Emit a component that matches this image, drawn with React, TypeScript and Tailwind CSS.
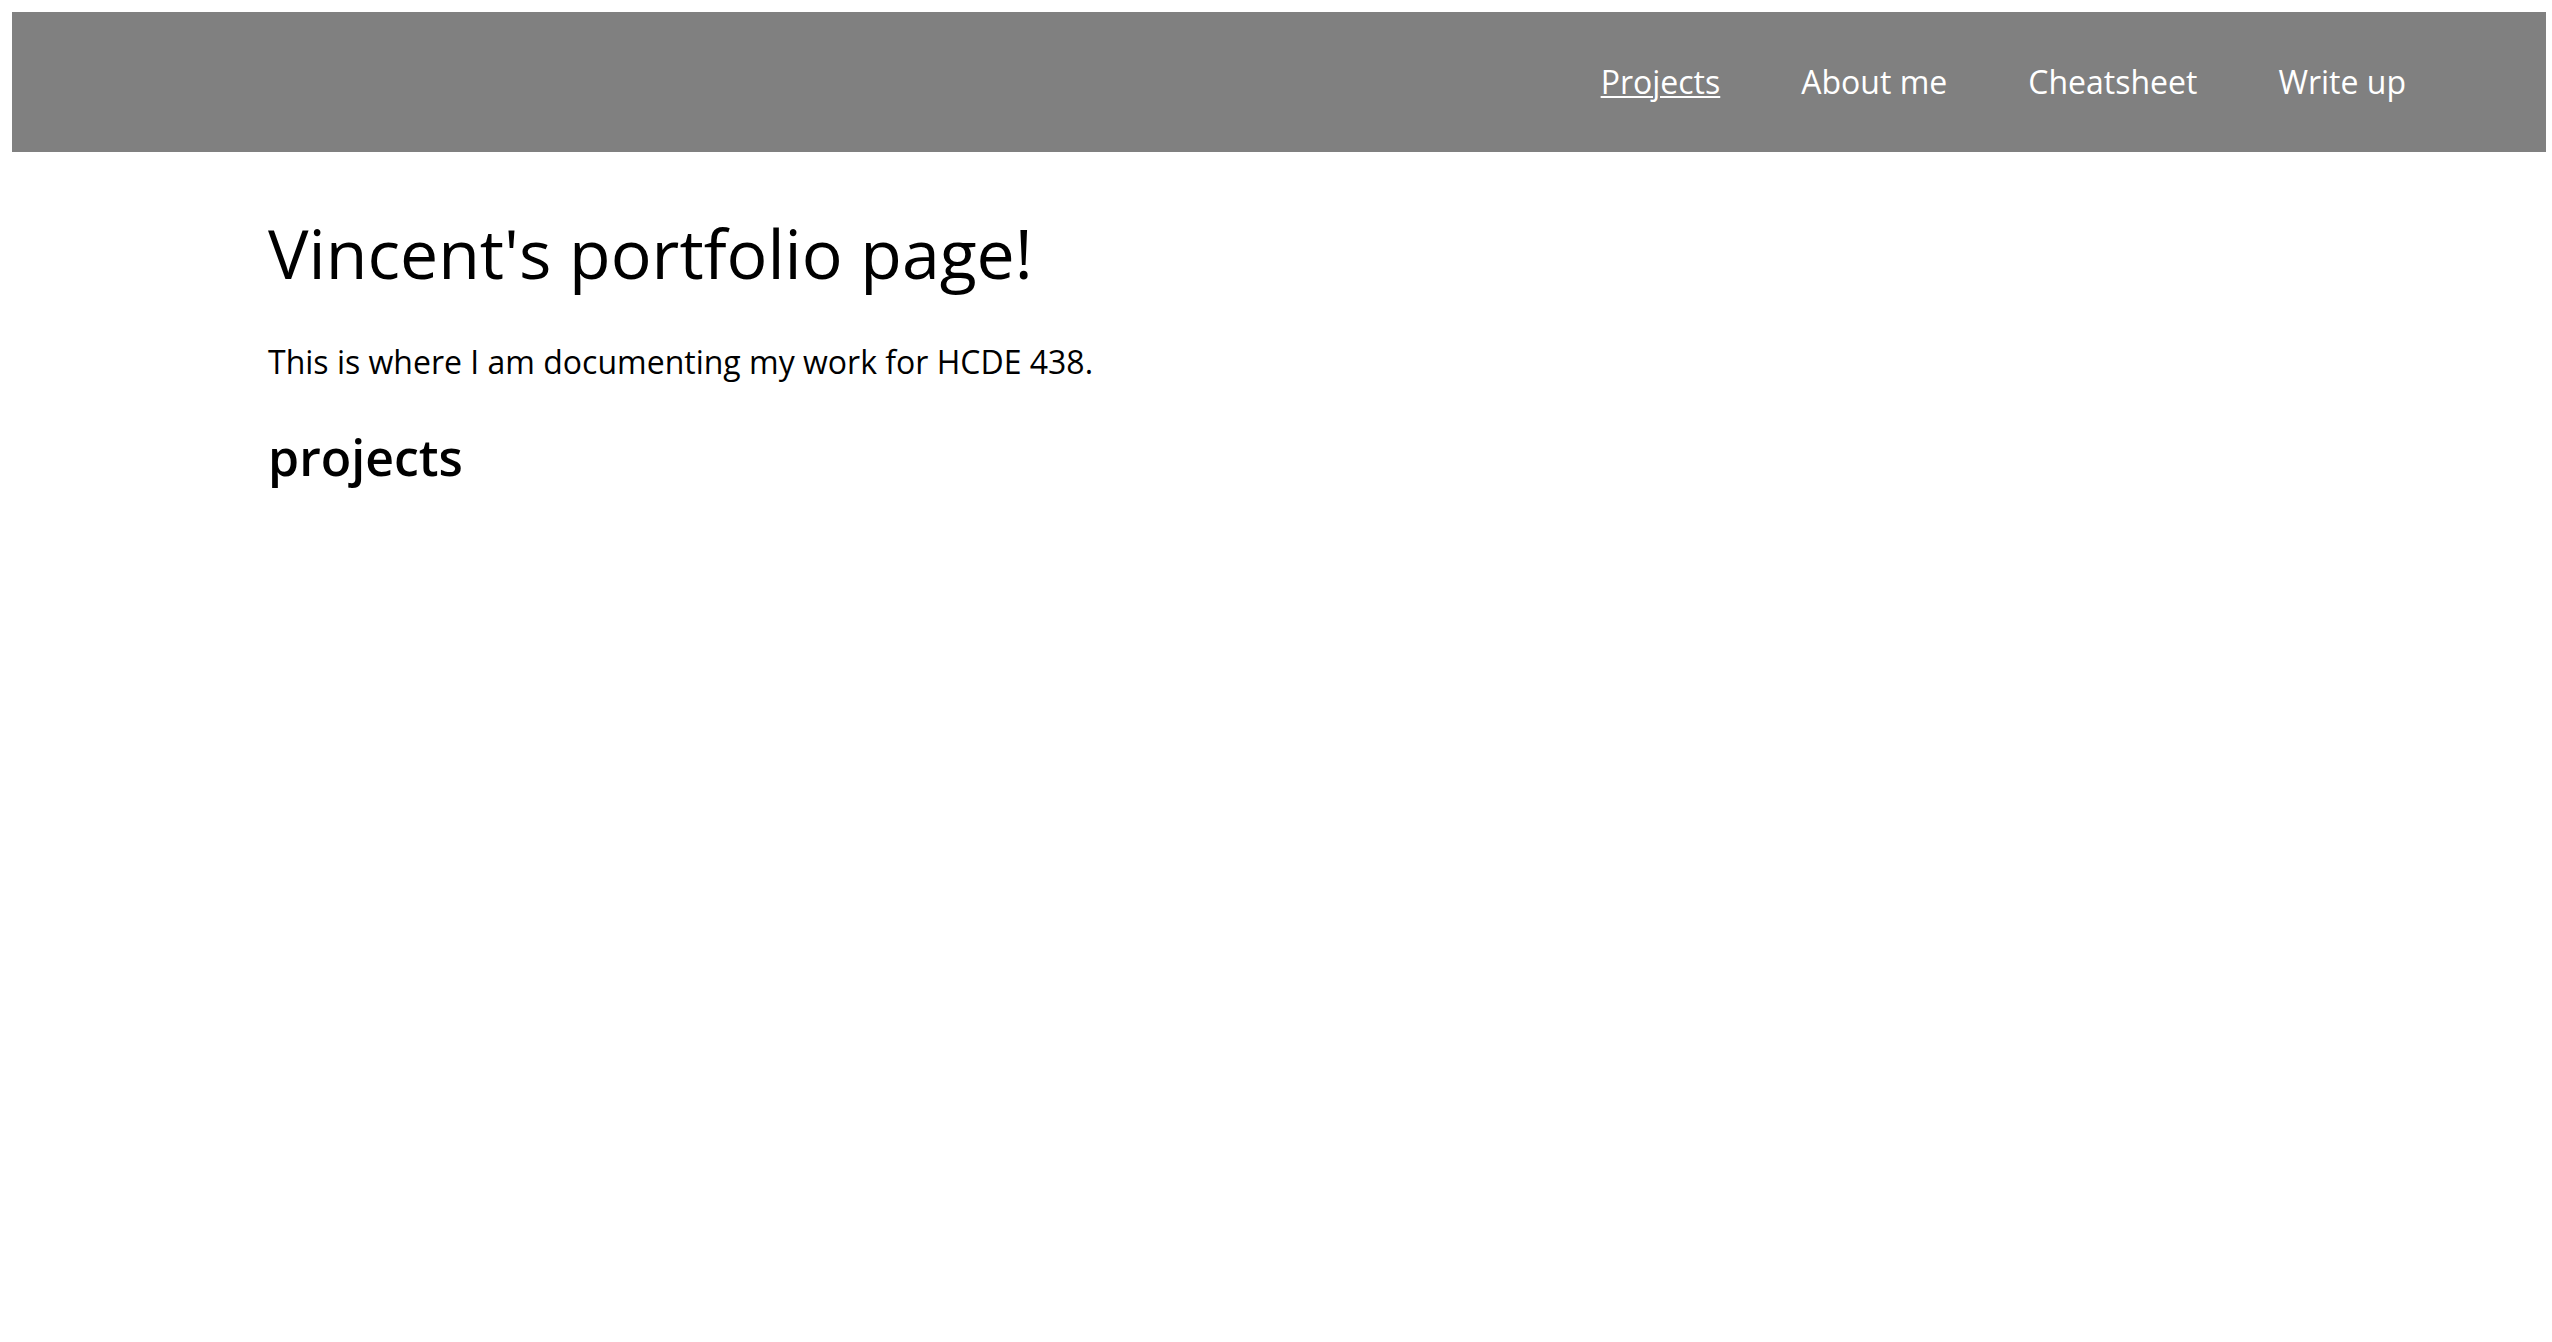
import React from 'react';

const links = ['Projects', 'About me', 'Cheatsheet', 'Write up'];

export default function App() {
  return (
    <div className="min-h-screen bg-white pt-[12px] pl-[12px] pr-[6px] font-['Open_Sans',sans-serif] text-black">
      <header className="h-[140px] bg-[#808080] flex items-center justify-end pr-[140px]">
        <nav className="flex items-center gap-[81px]">
          {links.map((l, i) => (
            <a
              key={l}
              href="#"
              className={
                'text-white text-[32px] leading-[1.362] ' +
                (i === 0 ? 'underline underline-offset-[2px] decoration-[2px]' : 'no-underline')
              }
            >
              {l}
            </a>
          ))}
        </nav>
      </header>
      <main className="pl-[256px]">
        <h1 className="mt-[55px] text-[68px] leading-[1.362] font-normal">
          Vincent's portfolio page!
        </h1>
        <p className="mt-[40px] text-[32px] leading-[1.362]">
          This is where I am documenting my work for HCDE 438.
        </p>
        <h2 className="mt-[40px] text-[50px] leading-[1.362] font-semibold">projects</h2>
      </main>
    </div>
  );
}
